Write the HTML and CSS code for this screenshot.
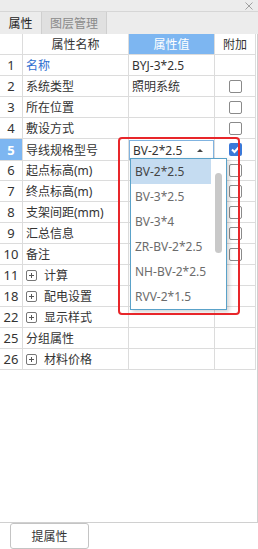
FILE: index.html
```html
<!DOCTYPE html>
<html lang="zh-CN">
  <head>
    <meta charset="UTF-8" />
    <title>属性</title>
    <link rel="stylesheet" href="styles.css">
  </head>
  <body>
    <div class="titlebar">
      <svg class="close" width="8" height="8" viewBox="0 0 8 8"><path d="M0.5 0.5L7.5 7.5M7.5 0.5L0.5 7.5" stroke="#a0a0a0" stroke-width="1" fill="none"/></svg>
    </div>
    <div class="tabs">
      <div class="tab active">属性</div>
      <div class="tab">图层管理</div>
    </div>
    <div class="panel">
      <div class="row head">
        <div class="cell idx"></div>
        <div class="cell name center">属性名称</div>
        <div class="cell val center hl">属性值</div>
        <div class="cell add center">附加</div>
      </div>
      <div class="row">
        <div class="cell idx">1</div>
        <div class="cell name link">名称</div>
        <div class="cell val">BYJ-3*2.5</div>
        <div class="cell add"></div>
      </div>
      <div class="row">
        <div class="cell idx">2</div>
        <div class="cell name">系统类型</div>
        <div class="cell val">照明系统</div>
        <div class="cell add"><span class="box"></span></div>
      </div>
      <div class="row">
        <div class="cell idx">3</div>
        <div class="cell name">所在位置</div>
        <div class="cell val"></div>
        <div class="cell add"><span class="box"></span></div>
      </div>
      <div class="row">
        <div class="cell idx">4</div>
        <div class="cell name">敷设方式</div>
        <div class="cell val"></div>
        <div class="cell add"><span class="box"></span></div>
      </div>
      <div class="row">
        <div class="cell idx sel">5</div>
        <div class="cell name">导线规格型号</div>
        <div class="cell val combo-cell">
          <div class="combo">BV-2*2.5<span class="arrow"></span></div>
        </div>
        <div class="cell add">
          <span class="box checked">
            <svg width="13" height="13" viewBox="0 0 13 13"><path d="M3 6.5L5.5 9L10 4" stroke="#fff" stroke-width="2" fill="none"/></svg>
          </span>
        </div>
      </div>
      <div class="row">
        <div class="cell idx">6</div>
        <div class="cell name">起点标高(m)</div>
        <div class="cell val"></div>
        <div class="cell add"><span class="box"></span></div>
      </div>
      <div class="row">
        <div class="cell idx">7</div>
        <div class="cell name">终点标高(m)</div>
        <div class="cell val"></div>
        <div class="cell add"><span class="box"></span></div>
      </div>
      <div class="row">
        <div class="cell idx">8</div>
        <div class="cell name">支架间距(mm)</div>
        <div class="cell val"></div>
        <div class="cell add"><span class="box"></span></div>
      </div>
      <div class="row">
        <div class="cell idx">9</div>
        <div class="cell name">汇总信息</div>
        <div class="cell val"></div>
        <div class="cell add"><span class="box"></span></div>
      </div>
      <div class="row">
        <div class="cell idx">10</div>
        <div class="cell name">备注</div>
        <div class="cell val"></div>
        <div class="cell add"><span class="box"></span></div>
      </div>
      <div class="row">
        <div class="cell idx">11</div>
        <div class="cell name"><span class="plus"></span>计算</div>
        <div class="cell val"></div>
        <div class="cell add"></div>
      </div>
      <div class="row">
        <div class="cell idx">18</div>
        <div class="cell name"><span class="plus"></span>配电设置</div>
        <div class="cell val"></div>
        <div class="cell add"></div>
      </div>
      <div class="row">
        <div class="cell idx">22</div>
        <div class="cell name"><span class="plus"></span>显示样式</div>
        <div class="cell val"></div>
        <div class="cell add"></div>
      </div>
      <div class="row">
        <div class="cell idx">25</div>
        <div class="cell name">分组属性</div>
        <div class="cell val"></div>
        <div class="cell add"></div>
      </div>
      <div class="row">
        <div class="cell idx">26</div>
        <div class="cell name"><span class="plus"></span>材料价格</div>
        <div class="cell val"></div>
        <div class="cell add"></div>
      </div>

      <!-- dropdown list of the combo in row 5 -->
      <div class="dropdown">
        <div class="option current">BV-2*2.5</div>
        <div class="option">BV-3*2.5</div>
        <div class="option">BV-3*4</div>
        <div class="option">ZR-BV-2*2.5</div>
        <div class="option">NH-BV-2*2.5</div>
        <div class="option">RVV-2*1.5</div>
        <div class="thumb"></div>
      </div>
      <div class="mark"></div>
    </div>
    <div class="footer">
      <button class="btn">提属性</button>
    </div>
  </body>
</html>
```

FILE: styles.css
```css
body {
  margin: 0;
  width: 258px;
  height: 549px;
  background: #fff;
  font-family: "Noto Sans", "Noto Sans CJK SC", sans-serif;
  font-size: 12px;
  color: #333;
  overflow: hidden;
}

.titlebar {
  height: 11px;
  background: #ececec;
  border-bottom: 1px solid #d6d6d6;
  display: flex;
  justify-content: flex-end;
  align-items: center;
  padding-right: 5px;
}

.close {
  display: block;
}

.tabs {
  height: 22px;
  background: #ececec;
  display: flex;
}

.tab {
  box-sizing: border-box;
  height: 22px;
  display: flex;
  align-items: center;
  justify-content: center;
  font-size: 12px;
  color: #8a8a8a;
  background: #e0e0e0;
  border-left: 1px solid #cfcfcf;
  border-right: 1px solid #cfcfcf;
  width: 66px;
}

.tab.active {
  width: 41px;
  background: #ececec;
  color: #222;
  border: none;
}

.panel {
  position: relative;
  height: 488px;
  background: #fff;
  border-right: 1px solid #d0d0d0;
  border-bottom: 1px solid #d0d0d0;
}

.row {
  display: grid;
  grid-template-columns: 23px 106px 86px 41px;
  height: 21px;
}

.cell {
  box-sizing: border-box;
  border-right: 1px solid #dcdcdc;
  border-bottom: 1px solid #dcdcdc;
  display: flex;
  align-items: center;
  padding-left: 3px;
  white-space: nowrap;
  overflow: hidden;
}

.cell.center {
  justify-content: center;
  padding-left: 0;
}

.idx {
  justify-content: center;
  padding-left: 0;
  font-size: 13px;
  color: #333;
}

.idx.sel {
  background: #7db6f1;
  color: #fff;
  font-weight: bold;
}

.hl {
  background: #7db6f1;
  color: #fff;
}

.head .cell {
  font-size: 12px;
}

.link {
  color: #2f6fd0;
}

.add {
  justify-content: center;
  padding-left: 0;
}

.box {
  box-sizing: border-box;
  width: 13px;
  height: 13px;
  border: 1px solid #8a8a8a;
  border-radius: 2px;
  background: #fff;
}

.box.checked {
  border: none;
  background: #3a79d9;
}

.box svg {
  display: block;
}

.plus {
  box-sizing: border-box;
  width: 11px;
  height: 11px;
  border: 1px solid #777;
  border-radius: 2px;
  margin: 0 7px 0 0;
  position: relative;
}

.plus::before,
.plus::after {
  content: "";
  position: absolute;
  background: #555;
}

.plus::before {
  left: 2px;
  top: 4px;
  width: 5px;
  height: 1px;
}

.plus::after {
  left: 4px;
  top: 2px;
  width: 1px;
  height: 5px;
}

.combo-cell {
  padding: 0;
  overflow: visible;
}

.combo {
  box-sizing: border-box;
  width: 86px;
  height: 20px;
  margin-top: 1px;
  border: 1px solid #80b3e0;
  background: #fff;
  display: flex;
  align-items: center;
  padding-left: 3px;
  position: relative;
  color: #333;
}

.arrow {
  position: absolute;
  right: 10px;
  top: 8px;
  width: 0;
  height: 0;
  border-left: 3px solid transparent;
  border-right: 3px solid transparent;
  border-bottom: 3px solid #444;
}

.dropdown {
  position: absolute;
  left: 130px;
  top: 124px;
  box-sizing: border-box;
  width: 97px;
  height: 152px;
  background: #fff;
  border: 1px solid #5aa2c9;
  box-shadow: 2px 2px 4px rgba(0, 0, 0, 0.18);
  padding: 0;
}

.option {
  width: 80px;
  height: 25px;
  display: flex;
  align-items: center;
  padding-left: 4px;
  box-sizing: border-box;
  color: #6c6c6c;
  font-size: 12px;
}

.option.current {
  background: #c5dcf1;
  color: #444;
}

.thumb {
  position: absolute;
  left: 84px;
  top: 14px;
  width: 7px;
  height: 80px;
  border-radius: 4px;
  background: #c9c9c9;
}

.mark {
  position: absolute;
  left: 118px;
  top: 103px;
  box-sizing: border-box;
  width: 122px;
  height: 178px;
  border: 2.5px solid #e8262a;
  border-radius: 4px;
  pointer-events: none;
}

.footer {
  height: 26px;
  padding-left: 10px;
}

.btn {
  box-sizing: border-box;
  width: 79px;
  height: 26px;
  border: 1px solid #c4c4c4;
  border-radius: 3px;
  background: #fff;
  font-family: "Noto Sans", "Noto Sans CJK SC", sans-serif;
  font-size: 12px;
  color: #333;
  padding: 0;
}
```
